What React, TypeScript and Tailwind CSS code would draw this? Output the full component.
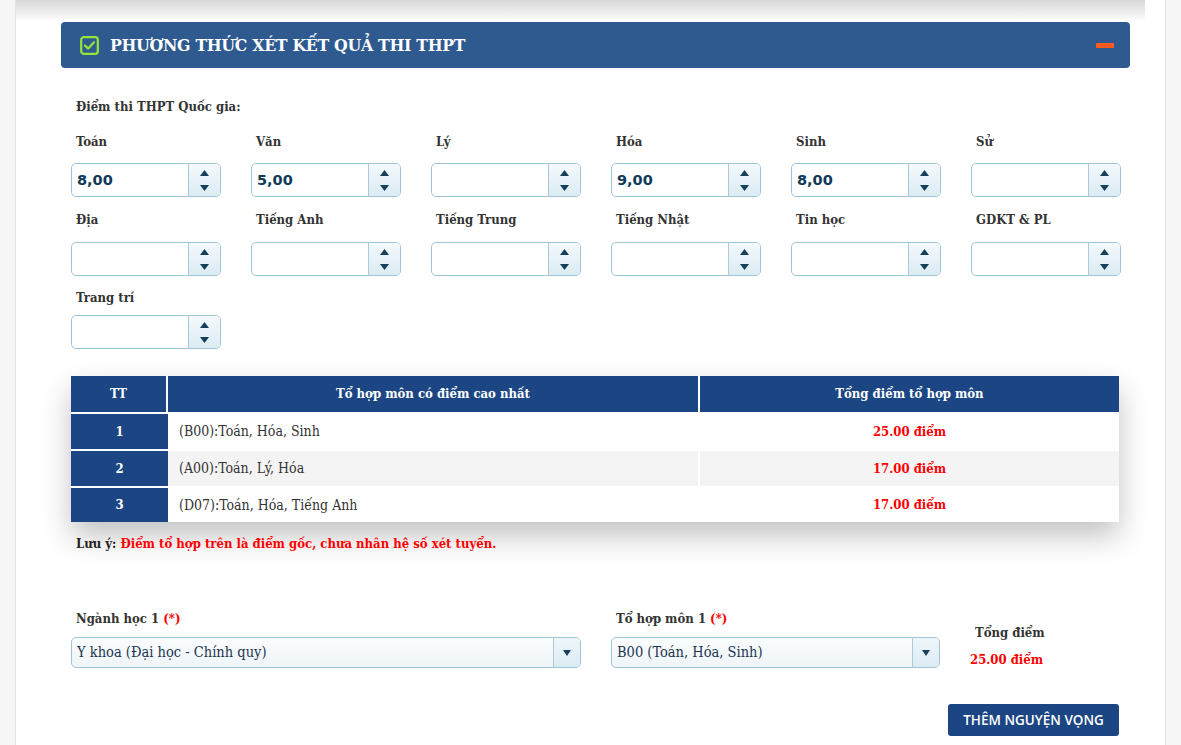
import React from "react";

const slab = "font-['DejaVu_Serif',serif] font-stretch-condensed";
const sans = "font-['DejaVu_Sans',sans-serif]";

type Field = { label: string; value?: string };

const row1: Field[] = [
  { label: "Toán", value: "8,00" },
  { label: "Văn", value: "5,00" },
  { label: "Lý" },
  { label: "Hóa", value: "9,00" },
  { label: "Sinh", value: "8,00" },
  { label: "Sử" },
];

const row2: Field[] = [
  { label: "Địa" },
  { label: "Tiếng Anh" },
  { label: "Tiếng Trung" },
  { label: "Tiếng Nhật" },
  { label: "Tin học" },
  { label: "GDKT & PL" },
];

const combos = [
  { tt: "1", name: "(B00):Toán, Hóa, Sinh", total: "25.00 điểm" },
  { tt: "2", name: "(A00):Toán, Lý, Hóa", total: "17.00 điểm" },
  { tt: "3", name: "(D07):Toán, Hóa, Tiếng Anh", total: "17.00 điểm" },
];

function Spinner({ value }: { value?: string }) {
  return (
    <div className="flex h-[34px] w-[150px] rounded-[5px] border border-[#9fc5d6] bg-white overflow-hidden">
      <div className={`flex-1 flex items-center pl-[5px] pt-[1px] text-[14.5px] font-bold text-[#0f3a58] ${sans}`}>
        {value}
      </div>
      <div className="w-[32px] border-l border-[#a9cbdb] bg-gradient-to-b from-[#f4f9fc] to-[#dcebf3] flex flex-col items-center justify-center gap-[9px]">
        <svg width="9" height="6" viewBox="0 0 9 6">
          <path d="M4.5 0 L9 6 L0 6 Z" fill="#163f5c" />
        </svg>
        <svg width="9" height="6" viewBox="0 0 9 6">
          <path d="M0 0 L9 0 L4.5 6 Z" fill="#163f5c" />
        </svg>
      </div>
    </div>
  );
}

function FieldCell({ f, gap }: { f: Field; gap: string }) {
  return (
    <div className="flex flex-col">
      <div className={`h-[20px] leading-[20px] pl-[5px] text-[13px] font-bold text-[#333] ${slab} ${gap}`}>
        {f.label}
      </div>
      <Spinner value={f.value} />
    </div>
  );
}

function SelectBox({ text, width }: { text: string; width: string }) {
  return (
    <div className={`flex h-[31px] ${width} rounded-[5px] border border-[#9fc5d6] bg-gradient-to-b from-[#fbfdfe] to-[#eef4f8] overflow-hidden`}>
      <div className={`flex-1 flex items-center pl-[5px] text-[14.5px] text-[#1b3550] ${slab}`}>{text}</div>
      <div className="w-[27px] border-l border-[#a9cbdb] bg-gradient-to-b from-[#eef6fa] to-[#dcebf3] flex items-center justify-center">
        <svg width="8" height="6" viewBox="0 0 8 6">
          <path d="M0 0 L8 0 L4 6 Z" fill="#163f5c" />
        </svg>
      </div>
    </div>
  );
}

export default function App() {
  return (
    <div className="min-h-screen w-full bg-[#f6f6f6] flex">
      <div className="ml-[15px] w-[1151px] min-h-[745px] bg-white border-l border-r border-[#e2e2e2] flex flex-col">
        {/* shadow of the card above */}
        <div className="h-[22px] bg-gradient-to-b from-[#d8d8d8] to-white mr-[20px]" />

        {/* panel header */}
        <div className="ml-[45px] w-[1069px] h-[46px] rounded-[4px] bg-[#2e5a8f] flex items-center pl-[19px] pr-[16px]">
          <svg width="19" height="19" viewBox="0 0 19 19" className="shrink-0">
            <rect x="1.2" y="1.2" width="16.6" height="16.6" rx="2.5" fill="none" stroke="#94e53a" strokeWidth="2.2" />
            <path d="M5 9.6 L8.2 12.6 L14 6.2" fill="none" stroke="#94e53a" strokeWidth="2.2" strokeLinecap="round" strokeLinejoin="round" />
          </svg>
          <div className={`ml-[11px] text-[17.5px] font-bold text-white tracking-[-0.3px] ${slab}`}>
            PHƯƠNG THỨC XÉT KẾT QUẢ THI THPT
          </div>
          <div className="ml-auto w-[18px] h-[5px] rounded-[1px] bg-[#ff5a1f]" />
        </div>

        {/* body */}
        <div className="ml-[55px] w-[1049px] flex flex-col">
          <div className={`mt-[29px] h-[20px] leading-[20px] pl-[5px] text-[13px] font-bold text-[#333] ${slab}`}>
            Điểm thi THPT Quốc gia:
          </div>

          <div className="mt-[15px] grid grid-cols-[repeat(6,150px)] gap-x-[30px]">
            {row1.map((f) => (
              <FieldCell key={f.label} f={f} gap="mb-[11px]" />
            ))}
          </div>
          <div className="mt-[13px] grid grid-cols-[repeat(6,150px)] gap-x-[30px]">
            {row2.map((f) => (
              <FieldCell key={f.label} f={f} gap="mb-[12px]" />
            ))}
          </div>
          <div className="mt-[12px] grid grid-cols-[repeat(6,150px)] gap-x-[30px]">
            <FieldCell f={{ label: "Trang trí" }} gap="mb-[7px]" />
          </div>

          {/* combos table */}
          <div className="mt-[27px] w-[1048px] shadow-[0_14px_28px_rgba(0,0,0,0.24)]">
            <div className={`flex h-[36px] bg-[#1b4683] text-white text-[13px] font-bold ${slab}`}>
              <div className="w-[97px] flex items-center justify-center border-r-2 border-white">TT</div>
              <div className="w-[532px] flex items-center justify-center border-r-2 border-white">Tổ hợp môn có điểm cao nhất</div>
              <div className="flex-1 flex items-center justify-center">Tổng điểm tổ hợp môn</div>
            </div>
            {combos.map((c, i) => (
              <div key={c.tt} className={`flex ${i === 2 ? "h-[36px]" : "h-[37px]"} ${i === 1 ? "bg-[#f4f4f4]" : "bg-white"} border-t-2 border-white`}>
                <div className={`w-[97px] bg-[#1b4683] flex items-center justify-center text-white text-[13px] font-bold ${slab}`}>
                  {c.tt}
                </div>
                <div className={`w-[532px] flex items-center pl-[11px] text-[14px] text-[#333] border-r-2 border-white ${slab}`}>
                  {c.name}
                </div>
                <div className={`flex-1 flex items-center justify-center text-[13px] font-bold text-[#ff0000] ${slab}`}>
                  {c.total}
                </div>
              </div>
            ))}
          </div>

          <div className={`mt-[12px] h-[20px] leading-[20px] pl-[5px] text-[13px] font-bold ${slab}`}>
            <span className="text-[#222]">Lưu ý:</span>{" "}
            <span className="text-[#ff0000]">Điểm tổ hợp trên là điểm gốc, chưa nhân hệ số xét tuyển.</span>
          </div>

          {/* wishes */}
          <div className="mt-[55px] flex">
            <div className="w-[510px] flex flex-col">
              <div className={`h-[20px] leading-[20px] pl-[5px] text-[13px] font-bold text-[#333] ${slab}`}>
                Ngành học 1 <span className="text-[#ff0000]">(*)</span>
              </div>
              <div className="mt-[8px]">
                <SelectBox text="Y khoa (Đại học - Chính quy)" width="w-[510px]" />
              </div>
            </div>
            <div className="ml-[30px] w-[329px] flex flex-col">
              <div className={`h-[20px] leading-[20px] pl-[5px] text-[13px] font-bold text-[#333] ${slab}`}>
                Tổ hợp môn 1 <span className="text-[#ff0000]">(*)</span>
              </div>
              <div className="mt-[8px]">
                <SelectBox text="B00 (Toán, Hóa, Sinh)" width="w-[329px]" />
              </div>
            </div>
            <div className="ml-[30px] flex flex-col">
              <div className={`mt-[14px] h-[20px] leading-[20px] pl-[5px] text-[13px] font-bold text-[#333] ${slab}`}>
                Tổng điểm
              </div>
              <div className={`mt-[7px] h-[20px] leading-[20px] text-[13px] font-bold text-[#ff0000] ${slab}`}>
                25.00 điểm
              </div>
            </div>
          </div>

          <div className="mt-[34px] flex justify-end pr-[1px]">
            <button className="h-[32px] w-[171px] rounded-[3px] bg-[#1b4683] text-white text-[13.5px] font-semibold font-['Open_Sans',sans-serif]">
              THÊM NGUYỆN VỌNG
            </button>
          </div>
        </div>
      </div>
    </div>
  );
}
